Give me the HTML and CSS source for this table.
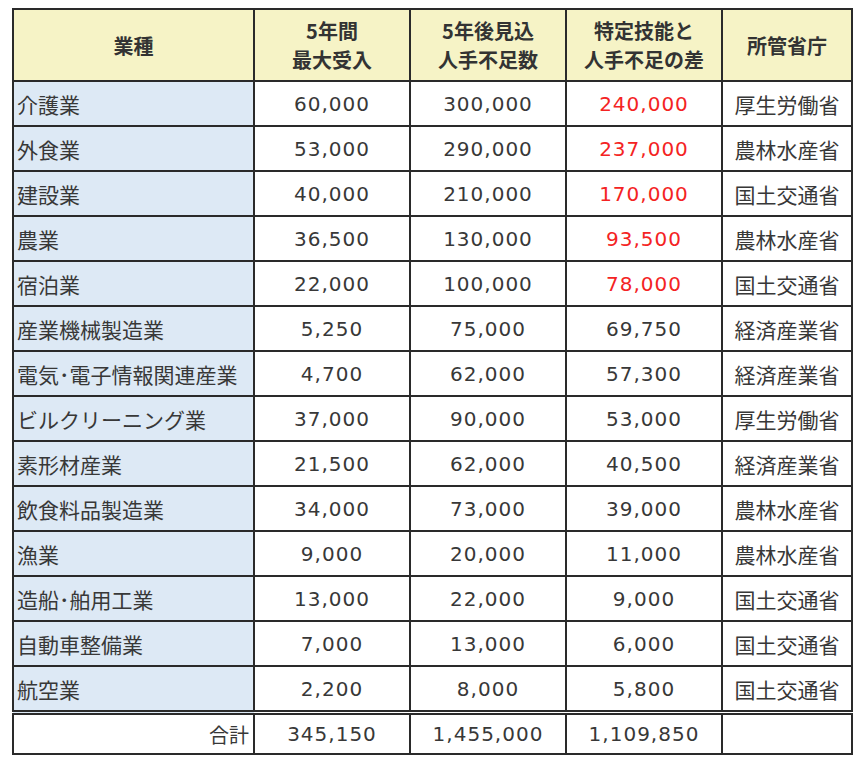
FILE: index.html
```html
<!DOCTYPE html>
<html lang="ja">
<head>
<meta charset="utf-8">
<title>特定技能</title>
<link rel="stylesheet" href="styles.css">
</head>
<body>
<table class="tbl">
  <colgroup>
    <col class="c1"><col class="c2"><col class="c3"><col class="c4"><col class="c5">
  </colgroup>
  <thead>
    <tr class="head">
      <th>業種</th>
      <th>5年間<br>最大受入</th>
      <th>5年後見込<br>人手不足数</th>
      <th>特定技能と<br>人手不足の差</th>
      <th>所管省庁</th>
    </tr>
  </thead>
  <tbody>
    <tr><td class="name">介護業</td><td class="num">60,000</td><td class="num">300,000</td><td class="num red">240,000</td><td class="min">厚生労働省</td></tr>
    <tr><td class="name">外食業</td><td class="num">53,000</td><td class="num">290,000</td><td class="num red">237,000</td><td class="min">農林水産省</td></tr>
    <tr><td class="name">建設業</td><td class="num">40,000</td><td class="num">210,000</td><td class="num red">170,000</td><td class="min">国土交通省</td></tr>
    <tr><td class="name">農業</td><td class="num">36,500</td><td class="num">130,000</td><td class="num red">93,500</td><td class="min">農林水産省</td></tr>
    <tr><td class="name">宿泊業</td><td class="num">22,000</td><td class="num">100,000</td><td class="num red">78,000</td><td class="min">国土交通省</td></tr>
    <tr><td class="name">産業機械製造業</td><td class="num">5,250</td><td class="num">75,000</td><td class="num">69,750</td><td class="min">経済産業省</td></tr>
    <tr><td class="name">電気･電子情報関連産業</td><td class="num">4,700</td><td class="num">62,000</td><td class="num">57,300</td><td class="min">経済産業省</td></tr>
    <tr><td class="name">ビルクリーニング業</td><td class="num">37,000</td><td class="num">90,000</td><td class="num">53,000</td><td class="min">厚生労働省</td></tr>
    <tr><td class="name">素形材産業</td><td class="num">21,500</td><td class="num">62,000</td><td class="num">40,500</td><td class="min">経済産業省</td></tr>
    <tr><td class="name">飲食料品製造業</td><td class="num">34,000</td><td class="num">73,000</td><td class="num">39,000</td><td class="min">農林水産省</td></tr>
    <tr><td class="name">漁業</td><td class="num">9,000</td><td class="num">20,000</td><td class="num">11,000</td><td class="min">農林水産省</td></tr>
    <tr><td class="name">造船･舶用工業</td><td class="num">13,000</td><td class="num">22,000</td><td class="num">9,000</td><td class="min">国土交通省</td></tr>
    <tr><td class="name">自動車整備業</td><td class="num">7,000</td><td class="num">13,000</td><td class="num">6,000</td><td class="min">国土交通省</td></tr>
    <tr><td class="name">航空業</td><td class="num">2,200</td><td class="num">8,000</td><td class="num">5,800</td><td class="min">国土交通省</td></tr>
  </tbody>
  <tfoot>
    <tr class="total">
      <td class="label">合計</td>
      <td class="num">345,150</td>
      <td class="num">1,455,000</td>
      <td class="num">1,109,850</td>
      <td class="min"></td>
    </tr>
  </tfoot>
</table>
</body>
</html>
```

FILE: styles.css
```css
html, body {
  margin: 0;
  background: #ffffff;
}
body {
  padding: 8px 0 0 12px;
  font-family: "DejaVu Sans", "Noto Sans CJK JP", sans-serif;
  color: #383838;
}
.tbl {
  border-collapse: collapse;
  table-layout: fixed;
  width: 841px;
}
.c1 { width: 241px; }
.c2 { width: 156px; }
.c3 { width: 156px; }
.c4 { width: 156px; }
.c5 { width: 130px; }
.tbl th, .tbl td {
  border: 2px solid #2a2a2a;
  padding: 0;
  vertical-align: middle;
}
.head th {
  height: 70px;
  background: #f6f3c6;
  font-family: "Noto Sans CJK JP", sans-serif;
  font-weight: 700;
  font-size: 20px;
  line-height: 29px;
  color: #333;
  text-align: center;
}
tbody td {
  height: 43px;
}
.name {
  background: #dde9f5;
  font-family: "Noto Sans CJK JP", sans-serif;
  font-size: 21px;
  padding-left: 3px !important;
  white-space: nowrap;
}
.num {
  text-align: center;
  font-size: 20px;
  letter-spacing: 1px;
}
.red { color: #f42323; }
.min {
  text-align: center;
  font-family: "Noto Sans CJK JP", sans-serif;
  font-size: 21px;
}
.total td {
  height: 38px;
  border-top: 5px double #2a2a2a;
}
.label {
  text-align: right;
  font-family: "Noto Sans CJK JP", sans-serif;
  font-size: 20px;
  padding-right: 4px !important;
}
```
